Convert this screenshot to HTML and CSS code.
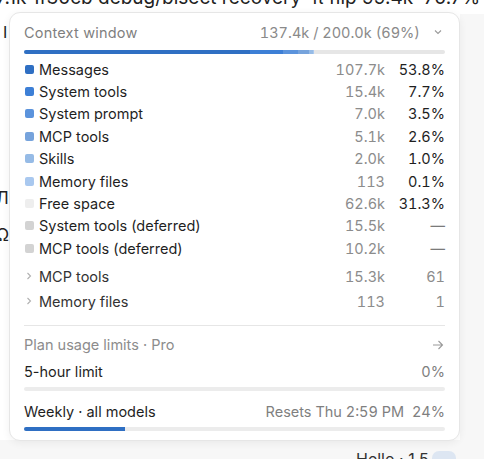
FILE: index.html
```html
<!DOCTYPE html>
<html>
<head>
<meta charset="utf-8">
<link rel="stylesheet" href="styles.css">
</head>
<body>
<div class="page">
  <div class="bg-top">7.1k 1f30cb debug/bisect recovery ·π flip 99.4k ·70.7% 185k</div>
  <div class="bg-left">
    <span class="g1">I</span>
    <span class="g2">Л</span>
    <span class="g3">Ω</span>
  </div>
  <div class="bg-right"></div>
  <div class="bg-bottom"><span class="hello">Hello · 1.5</span><span class="avatar"></span></div>

  <div class="popup">
    <div class="head">
      <span class="title">Context window</span>
      <span class="total">137.4k / 200.0k (69%)</span>
      <svg class="chev-down" width="10" height="10" viewBox="0 0 10 10"><path d="M2 3.5 L5 6.5 L8 3.5" fill="none" stroke="#9a9a9a" stroke-width="1.1"/></svg>
    </div>
    <div class="bar">
      <span class="seg c1" style="width:53.8%"></span>
      <span class="seg c2" style="width:7.7%"></span>
      <span class="seg c3" style="width:3.5%"></span>
      <span class="seg c4" style="width:2.6%"></span>
      <span class="seg c5" style="width:1.0%"></span>
      <span class="seg c6" style="width:0.4%"></span>
    </div>
    <div class="rows">
      <div class="row"><span class="sw c1"></span><span class="name">Messages</span><span class="val">107.7k</span><span class="pct">53.8%</span></div>
      <div class="row"><span class="sw c2"></span><span class="name">System tools</span><span class="val">15.4k</span><span class="pct">7.7%</span></div>
      <div class="row"><span class="sw c3"></span><span class="name">System prompt</span><span class="val">7.0k</span><span class="pct">3.5%</span></div>
      <div class="row"><span class="sw c4"></span><span class="name">MCP tools</span><span class="val">5.1k</span><span class="pct">2.6%</span></div>
      <div class="row"><span class="sw c5"></span><span class="name">Skills</span><span class="val">2.0k</span><span class="pct">1.0%</span></div>
      <div class="row"><span class="sw c6"></span><span class="name">Memory files</span><span class="val">113</span><span class="pct">0.1%</span></div>
      <div class="row"><span class="sw c7"></span><span class="name">Free space</span><span class="val">62.6k</span><span class="pct">31.3%</span></div>
      <div class="row"><span class="sw c8"></span><span class="name">System tools (deferred)</span><span class="val">15.5k</span><span class="pct dash">—</span></div>
      <div class="row"><span class="sw c8"></span><span class="name">MCP tools (deferred)</span><span class="val">10.2k</span><span class="pct dash">—</span></div>
      <div class="row exp first"><svg class="chev" width="10" height="10" viewBox="0 0 10 10"><path d="M3.5 2 L6.5 5 L3.5 8" fill="none" stroke="#b0b0b0" stroke-width="1.1"/></svg><span class="name">MCP tools</span><span class="val">15.3k</span><span class="pct muted">61</span></div>
      <div class="row exp"><svg class="chev" width="10" height="10" viewBox="0 0 10 10"><path d="M3.5 2 L6.5 5 L3.5 8" fill="none" stroke="#b0b0b0" stroke-width="1.1"/></svg><span class="name">Memory files</span><span class="val">113</span><span class="pct muted">1</span></div>
    </div>
    <div class="divider"></div>
    <div class="plan">
      <span>Plan usage limits · Pro</span>
      <svg class="arrow" width="12" height="10" viewBox="0 0 12 10"><path d="M1 5 H10.5 M6.5 1 L10.5 5 L6.5 9" fill="none" stroke="#9a9a9a" stroke-width="1.1"/></svg>
    </div>
    <div class="limit">
      <div class="lrow"><span class="lname">5-hour limit</span><span class="lval">0%</span></div>
      <div class="lbar"><span class="lfill" style="width:0%"></span></div>
    </div>
    <div class="limit weekly">
      <div class="lrow"><span class="lname">Weekly · all models</span><span class="lval">Resets Thu 2:59 PM&nbsp;&nbsp;24%</span></div>
      <div class="lbar"><span class="lfill" style="width:24%"></span></div>
    </div>
  </div>
</div>
</body>
</html>
```

FILE: styles.css
```css
* { box-sizing: border-box; }
html, body { margin: 0; padding: 0; }
body {
  width: 484px;
  height: 459px;
  overflow: hidden;
  background: #ffffff;
  font-family: Inter, "Noto Sans", sans-serif;
  color: #1f1f1f;
}
.page {
  position: relative;
  width: 484px;
  height: 459px;
  overflow: hidden;
}
.bg-top {
  position: absolute;
  left: -4px;
  top: -14px;
  font-size: 19px;
  line-height: 24px;
  color: #222;
  white-space: nowrap;
}
.bg-left {
  position: absolute;
  left: 0;
  top: 0;
  width: 9px;
  height: 459px;
  overflow: hidden;
}
.bg-left span {
  position: absolute;
  font-size: 17px;
  color: #222;
}
.bg-left .g1 { top: 22px; left: 3px; font-size: 16px; }
.bg-left .g2 { top: 188px; left: -4px; }
.bg-left .g3 { top: 225px; left: -4px; }
.bg-right {
  position: absolute;
  left: 460px;
  top: 14px;
  width: 24px;
  height: 445px;
  background: #f7f7f7;
}
.bg-bottom {
  position: absolute;
  left: 0;
  top: 440px;
  width: 484px;
  height: 19px;
  background: #f7f7f7;
}
.hello {
  position: absolute;
  left: 356px;
  top: 9px;
  font-size: 16px;
  color: #333;
}
.avatar {
  position: absolute;
  left: 432px;
  top: 11px;
  width: 24px;
  height: 24px;
  border-radius: 7px;
  background: #dde6f2;
}

.popup {
  position: absolute;
  left: 9px;
  top: 12px;
  width: 451px;
  height: 429px;
  background: #fff;
  border: 1px solid #e6e6e6;
  border-radius: 11px;
  box-shadow: 0 2px 8px rgba(0,0,0,0.06);
  padding: 9px 14px 0 14px;
  font-size: 14.5px;
}
.total, .val, .pct, .lval { font-variant-numeric: tabular-nums; }
.head {
  display: flex;
  align-items: center;
  height: 20px;
  color: #7f7f7f;
}
.head .title { flex: 1; letter-spacing: 0.2px; }
.head .total { color: #8a8a8a; }
.chev-down { margin-left: 13px; margin-right: 2px; }
.bar {
  display: flex;
  height: 4px;
  margin-top: 8px;
  border-radius: 2px;
  background: #e6e6e6;
  overflow: hidden;
}
.seg { display: block; height: 100%; }
.c1 { background: #2f6fc3; }
.c2 { background: #3d7fd6; }
.c3 { background: #5b93dc; }
.c4 { background: #76a3dc; }
.c5 { background: #96bbe6; }
.c6 { background: #a9c8ef; }
.c7 { background: #eeeeee; }
.c8 { background: #d3d3d3; }

.rows { margin-top: 4px; }
.row {
  display: flex;
  align-items: center;
  height: 22.4px;
  white-space: nowrap;
}
.sw {
  width: 9px;
  height: 9px;
  border-radius: 2px;
  margin-left: 1px;
  margin-right: 5px;
  flex: none;
}
.chev { margin-left: 0; margin-right: 5px; flex: none; }
.name { flex: 1; color: #1f1f1f; }
.val { color: #8c8c8c; text-align: right; }
.pct { width: 60px; text-align: right; color: #1f1f1f; }
.pct.muted { color: #8c8c8c; }
.pct.dash { color: #7a7a7a; }
.row.exp { height: 25px; }
.row.exp .name { color: #333; }
.row.exp.first { margin-top: 4px; }

.divider {
  height: 1px;
  background: #e6e6e6;
  margin-top: 11px;
}
.plan {
  display: flex;
  align-items: center;
  justify-content: space-between;
  height: 20px;
  margin-top: 9px;
  color: #8c8c8c;
}
.arrow { margin-right: 1px; }
.limit { margin-top: 7px; }
.lrow {
  display: flex;
  align-items: center;
  justify-content: space-between;
  height: 20px;
}
.lname { color: #1f1f1f; }
.lval { color: #7f7f7f; }
.lbar {
  height: 4px;
  margin-top: 5px;
  border-radius: 2px;
  background: #ececec;
  overflow: hidden;
}
.lfill { display: block; height: 100%; background: #2f6fc3; }
.limit.weekly { margin-top: 11px; }
```
